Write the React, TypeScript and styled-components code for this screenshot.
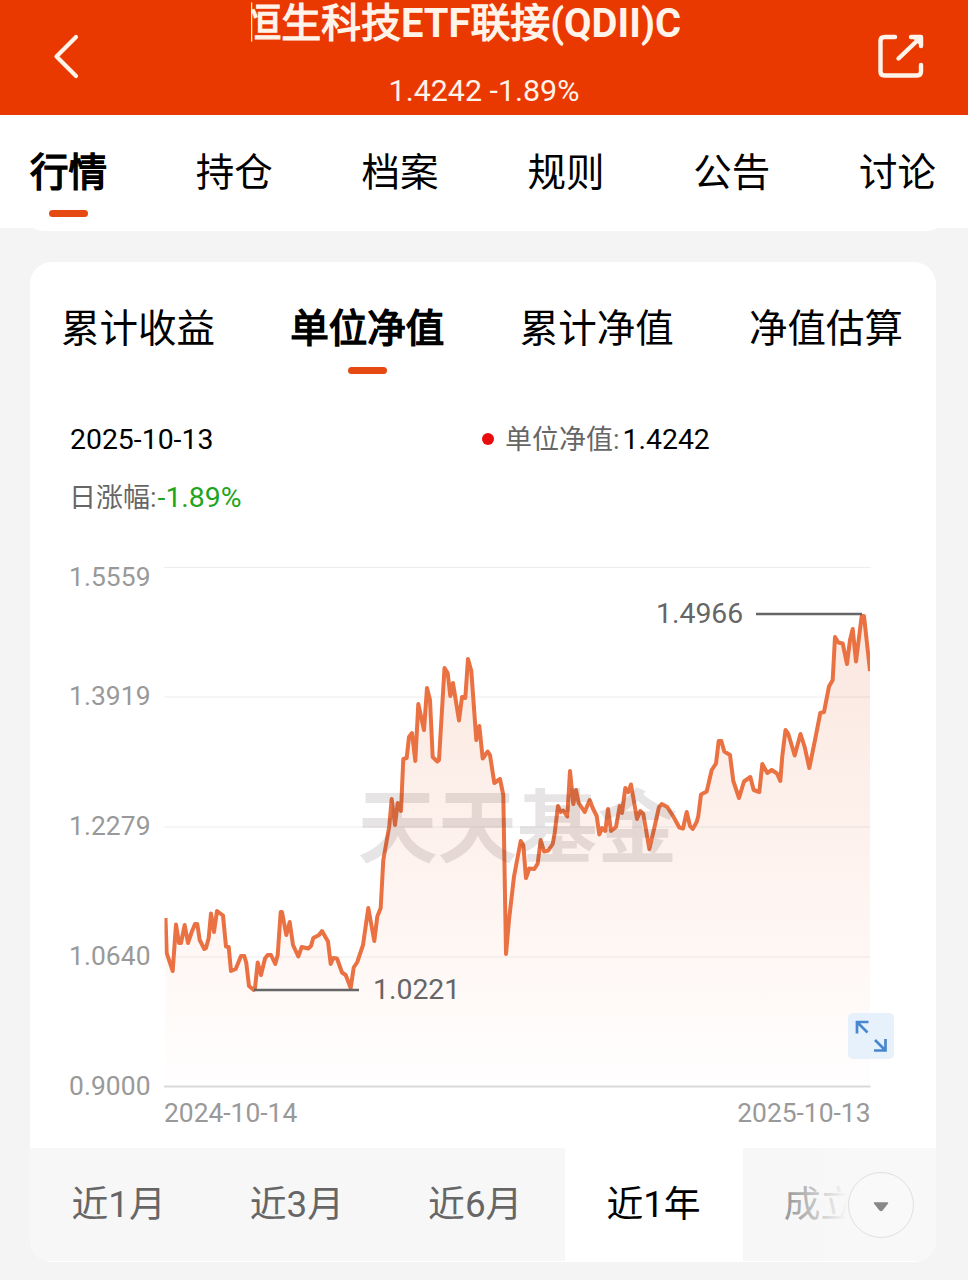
import React from "react";
import styled, { createGlobalStyle, css } from "styled-components";

const GlobalStyle = createGlobalStyle`
  * { box-sizing: border-box; }
  body {
    margin: 0;
    background: #f4f4f4;
    font-family: Roboto, "Noto Sans CJK SC", sans-serif;
    color: #000;
  }
`;

const Page = styled.div`
  width: 968px;
  height: 1280px;
  overflow: hidden;
  display: flex;
  flex-direction: column;
  background: #f4f4f4;
`;

const Header = styled.header`
  height: 115px;
  flex: none;
  display: flex;
  justify-content: space-between;
  background: #ea3900;
  color: #fff3ea;
`;

const HeaderIcon = styled.svg`
  width: 116px;
  height: 115px;
  fill: none;
  stroke: #fff3ea;
`;

const HeaderCenter = styled.div`
  width: 466px;
  display: flex;
  flex-direction: column;
  align-items: center;
`;

const TitleClip = styled.div`
  width: 100%;
  height: 60px;
  overflow: hidden;
  display: flex;
  justify-content: flex-end;
  padding-right: 36px;
`;

const Title = styled.div`
  flex: none;
  white-space: nowrap;
  font-size: 39.9px;
  line-height: 48px;
  -webkit-text-stroke: 1.3px currentColor;

  b {
    font-weight: 700;
    -webkit-text-stroke: 0;
  }
`;

const Price = styled.div`
  font-size: 30.4px;
  line-height: 62px;
  height: 55px;
`;

const Nav = styled.nav`
  height: 113px;
  flex: none;
  display: flex;
  justify-content: space-between;
  padding: 0 32px 0 30px;
  background: #fff;
`;

const tabText = css<{ $active?: boolean }>`
  display: flex;
  flex-direction: column;
  align-items: center;
  font-size: 38.5px;
  line-height: 56px;
  -webkit-text-stroke: ${(p) => (p.$active ? "1.5px #000" : "0")};
`;

const NavTab = styled.div<{ $active?: boolean }>`
  ${tabText}
  padding-top: 30px;
`;

const Marker = styled.i<{ $gap: number }>`
  width: 39px;
  height: 7px;
  margin-top: ${(p) => p.$gap}px;
  border-radius: 4px;
  background: #e64a12;
`;

const PreviousCardEdge = styled.div`
  height: 3px;
  flex: none;
  margin: 0 32px 31px 34px;
  border-radius: 0 0 12px 12px / 0 0 3px 3px;
  background: #fff;
`;

const Card = styled.section`
  width: 906px;
  height: 1000px;
  flex: none;
  margin-left: 30px;
  display: flex;
  flex-direction: column;
  background: #fff;
  border-radius: 22px;
  overflow: hidden;
`;

const SubTabs = styled.div`
  height: 134px;
  display: flex;
  justify-content: space-between;
  padding: 0 33px 0 31px;
`;

const SubTab = styled.div<{ $active?: boolean }>`
  ${tabText}
  padding-top: 39px;
`;

const Info = styled.div`
  height: 144px;
  display: grid;
  grid-template-columns: 412px 1fr;
  grid-auto-rows: 58px;
  padding: 15px 40px 0;
  font-size: 28.4px;
  line-height: 58px;
`;

const InfoItem = styled.div`
  display: flex;
  align-items: center;
`;

const InfoLabel = styled.span<{ $space?: number }>`
  margin-left: -1px;
  margin-right: ${(p) => p.$space ?? 0}px;
  color: #666;
  font-size: 27px;
`;

const Change = styled.span`
  color: #1ea51e;
`;

const Dot = styled.i`
  width: 12px;
  height: 12px;
  margin: 0 12px 2px 0;
  border-radius: 50%;
  background: #e90c0c;
`;

const ChartArea = styled.div`
  position: relative;
  height: 608px;
`;

const Chart = styled.svg`
  display: block;
  width: 906px;
  height: 608px;
`;

const AxisLabel = styled.text`
  font-size: 26.4px;
  fill: #999;
`;

const Callout = styled.text`
  font-size: 28.4px;
  fill: #666;
`;

const Watermark = styled.text`
  font-family: "Noto Sans CJK SC", sans-serif;
  font-size: 80px;
  font-weight: 700;
  fill: rgba(60, 50, 50, 0.13);
`;

const ExpandButton = styled.button`
  position: absolute;
  left: 818px;
  top: 473px;
  width: 46px;
  height: 46px;
  padding: 0;
  border: 0;
  border-radius: 5px;
  background: rgba(226, 238, 252, 0.85);
`;

const Periods = styled.div`
  position: relative;
  height: 113px;
  flex: none;
  display: flex;
  background: #f7f7f7;
`;

const Period = styled.div<{ $active?: boolean; $last?: boolean }>`
  width: 178.3px;
  flex: none;
  text-align: center;
  padding-right: 1px;
  padding-left: ${(p) => (p.$last ? 14 : 0)}px;
  font-size: 36.8px;
  line-height: 114px;
  white-space: nowrap;
  color: ${(p) => (p.$active ? "#000" : "#666")};
  background: ${(p) => (p.$active ? "#fff" : "transparent")};
`;

const MoreFade = styled.div`
  position: absolute;
  right: 0;
  top: 0;
  width: 193px;
  height: 113px;
  display: flex;
  align-items: center;
  justify-content: flex-end;
  padding-right: 22px;
  background: linear-gradient(90deg, rgba(247, 247, 247, 0) 0, rgba(247, 247, 247, 0.4) 25%, #f8f8f8 54%);
`;

const MoreButton = styled.button`
  width: 66px;
  height: 66px;
  padding: 0;
  border: 1.5px solid #e0e0e0;
  border-radius: 50%;
  background: #f9f9f9;
  display: flex;
  align-items: center;
  justify-content: center;
`;

/* Screen-space samples of the net value curve. */
const curve: number[][] = [
  [165.5, 918], [166.7, 953], [169, 960], [172.7, 971], [176, 924.5], [179, 943], [181, 943], [184.7, 925],
  [188, 943], [191.7, 932], [195, 924], [197.3, 924], [199.7, 940], [204.3, 949], [206, 948], [208.7, 938],
  [211, 913.5], [214, 932], [217, 911], [223, 915.5], [226, 946.5], [228.7, 947], [231, 971], [235.7, 969],
  [241, 956], [244.3, 956], [246.3, 963], [249, 986], [253.7, 990], [255, 988], [257.7, 962.5], [261, 975],
  [265, 958.5], [267.7, 955], [271, 955], [275.3, 964], [277.7, 955], [280.7, 912], [282, 912], [286.3, 935],
  [289.7, 922], [293, 945], [298.3, 956.5], [301.7, 947], [308.3, 948.5], [311, 946], [313.3, 938],
  [319, 935], [322, 931], [328, 941.5], [330.7, 964], [333.3, 958], [337, 958.5], [342, 972.5], [345.7, 975],
  [350.7, 988], [353.7, 967.5], [357.3, 962], [363, 945], [368.3, 908], [374.3, 941], [377.3, 916.5],
  [380.7, 908], [383.3, 860], [389.3, 826], [391.7, 799], [395, 825], [397.7, 803], [401, 811], [403.3, 759],
  [406.7, 758], [409, 737], [412, 733], [415.3, 761], [418.3, 704], [424, 730], [427, 688], [430, 700],
  [432.7, 757], [437.3, 761.5], [439, 760], [444.5, 668], [447.7, 673], [450.3, 696], [453, 683], [459, 720.5],
  [462, 697], [465.3, 698], [468, 659], [471.3, 671], [476.3, 740], [479.3, 726], [482.7, 758.5], [487.7, 751.5],
  [490, 755], [494.3, 783], [500, 779], [503.3, 795], [506, 954], [509, 920], [514, 876.5], [520.7, 841],
  [523.3, 845], [526, 878], [529.3, 868.5], [534.3, 869], [537.7, 863.5], [540.7, 840], [544, 851.5],
  [548.3, 850.5], [552.7, 844], [554.7, 833], [558, 806], [560.7, 812], [563.3, 810.5], [567.3, 816.5],
  [570, 771], [573.3, 804], [576, 790], [578.7, 803], [584.7, 812], [589.7, 800], [592.7, 808], [596.7, 816],
  [599.3, 834.5], [602, 828], [605.3, 831], [608, 809], [611, 831], [616, 827], [619.7, 806], [622, 813],
  [625.3, 788], [628.3, 792], [631, 784.5], [637, 819], [640.3, 811], [643.3, 814], [649.3, 849], [654.3, 828],
  [659, 807], [661.7, 804], [667.3, 807], [673.3, 816.5], [679.3, 827.5], [683, 828.5], [686.7, 812],
  [690, 826], [692.7, 829], [696.7, 822], [698.3, 816], [701, 794.5], [706.7, 791.5], [711.7, 770], [716, 763.5],
  [718.7, 741], [721.3, 741], [724.3, 751.5], [730, 755], [733.3, 781], [739, 798], [744, 781.5], [750.3, 777],
  [753.7, 790], [759.3, 792], [762.3, 764], [767.3, 773], [771.7, 770], [777, 773.5], [780.3, 781], [782.3, 756],
  [785.5, 730], [788.3, 734], [794.7, 755.5], [800.5, 734], [804.7, 747], [809.3, 768], [815, 740], [820.3, 713],
  [824, 712], [829, 686.5], [832.7, 680], [835, 637], [838.3, 642.5], [842.7, 643.5], [847, 664], [850, 640],
  [852.7, 629], [856, 661.5], [861.7, 616], [864, 616], [870, 671],
];

const ORIGIN_X = 30;
const ORIGIN_Y = 540;
const points = curve.map(([x, y]) => `${(x - ORIGIN_X).toFixed(1)},${(y - ORIGIN_Y).toFixed(1)}`).join(" L");

const axis = [
  { label: "1.5559", y: 27.5, textY: 46 },
  { label: "1.3919", y: 157, textY: 165 },
  { label: "1.2279", y: 287, textY: 295 },
  { label: "1.0640", y: 417, textY: 425 },
  { label: "0.9000", y: 546.5, textY: 555 },
];

const navTabs = ["行情", "持仓", "档案", "规则", "公告", "讨论"];
const subTabs = ["累计收益", "单位净值", "累计净值", "净值估算"];
const periods = ["近1月", "近3月", "近6月", "近1年", "成立来"];

export default function App() {
  return (
    <Page>
      <GlobalStyle />
      <Header>
        <HeaderIcon viewBox="0 0 116 115" strokeWidth="4.200" strokeLinecap="round" strokeLinejoin="round">
          <path d="M76 37 56.500 56.500 76 76" />
        </HeaderIcon>
        <HeaderCenter>
          <TitleClip>
            <Title>
              恒生科技<b>ETF</b>联接<b>(QDII)C</b>
            </Title>
          </TitleClip>
          <Price>1.4242 -1.89%</Price>
        </HeaderCenter>
        <HeaderIcon viewBox="0 0 116 115" strokeWidth="4.400" strokeLinecap="round" strokeLinejoin="round">
          <path d="M43 37H32.500Q28.500 37 28.500 41V71.500Q28.500 75.500 32.500 75.500H65Q69 75.500 69 71.500V65M59 37H69V46M67 39 46.500 58.500" />
          <path d="M62 38H68V44Z" fill="#fff3ea" strokeWidth="2" />
        </HeaderIcon>
      </Header>
      <Nav>
        {navTabs.map((name, i) => (
          <NavTab key={name} $active={i === 0}>
            {name}
            {i === 0 && <Marker $gap={9} />}
          </NavTab>
        ))}
      </Nav>
      <PreviousCardEdge />
      <Card>
        <SubTabs>
          {subTabs.map((name, i) => (
            <SubTab key={name} $active={i === 1}>
              {name}
              {i === 1 && <Marker $gap={10} />}
            </SubTab>
          ))}
        </SubTabs>
        <Info>
          <InfoItem>2025-10-13</InfoItem>
          <InfoItem>
            <Dot />
            <InfoLabel $space={3}>单位净值:</InfoLabel>1.4242
          </InfoItem>
          <InfoItem>
            <InfoLabel $space={1}>日涨幅:</InfoLabel>
            <Change>-1.89%</Change>
          </InfoItem>
        </Info>
        <ChartArea>
          <Chart viewBox="0 0 906 608">
            <defs>
              <linearGradient id="area" x1="0" y1="75" x2="0" y2="546" gradientUnits="userSpaceOnUse">
                <stop offset="0" stopColor="#fae7df" />
                <stop offset="0.55" stopColor="#fef3ef" />
                <stop offset="1" stopColor="#fffefe" />
              </linearGradient>
              <clipPath id="plot">
                <rect x="134.500" y="20" width="705.500" height="530" />
              </clipPath>
            </defs>
            <path d={`M${points} L840,546 L135.500,546 Z`} fill="url(#area)" />
            {axis.map(({ label, y, textY }, i) => (
              <g key={label}>
                <line x1="134" x2="840.500" y1={y} y2={y} stroke={i === 4 ? "#d9d9d9" : "rgba(0,0,0,0.07)"} strokeWidth={i === 4 ? 1.8 : 1.2} />
                <AxisLabel x="39" y={textY} textLength="81.500">{label}</AxisLabel>
              </g>
            ))}
            <path d={`M${points}`} fill="none" stroke="#ea7142" strokeWidth="4" strokeLinejoin="round" clipPath="url(#plot)" />
            <path d="M726 74H832M224 450H329" stroke="#666" strokeWidth="2.400" />
            <Callout x="626" y="83">1.4966</Callout>
            <Callout x="343" y="459">1.0221</Callout>
            <Watermark x="327.500" y="316">天天基金</Watermark>
            <AxisLabel x="134" y="582">2024-10-14</AxisLabel>
            <AxisLabel x="840.500" y="582" textAnchor="end">2025-10-13</AxisLabel>
          </Chart>
          <ExpandButton aria-label="全屏">
            <svg width="46" height="46" viewBox="0 0 46 46" fill="none" stroke="#4787cf" strokeWidth="2.700">
              <path d="M20.500 9H9V20.500M9 9 19.500 19.500M26 37.500H37.500V26M37.500 37.500 27 27" />
            </svg>
          </ExpandButton>
        </ChartArea>
        <Periods>
          {periods.map((name, i) => (
            <Period key={name} $active={i === 3} $last={i === 4}>
              {name}
            </Period>
          ))}
          <MoreFade>
            <MoreButton aria-label="更多">
              <svg width="18" height="14" viewBox="0 0 18 14">
                <path d="M2.500 5H15.500L10 12Q9 13 8 12Z" fill="#888" stroke="#888" strokeWidth="1.500" strokeLinejoin="round" />
              </svg>
            </MoreButton>
          </MoreFade>
        </Periods>
      </Card>
    </Page>
  );
}
